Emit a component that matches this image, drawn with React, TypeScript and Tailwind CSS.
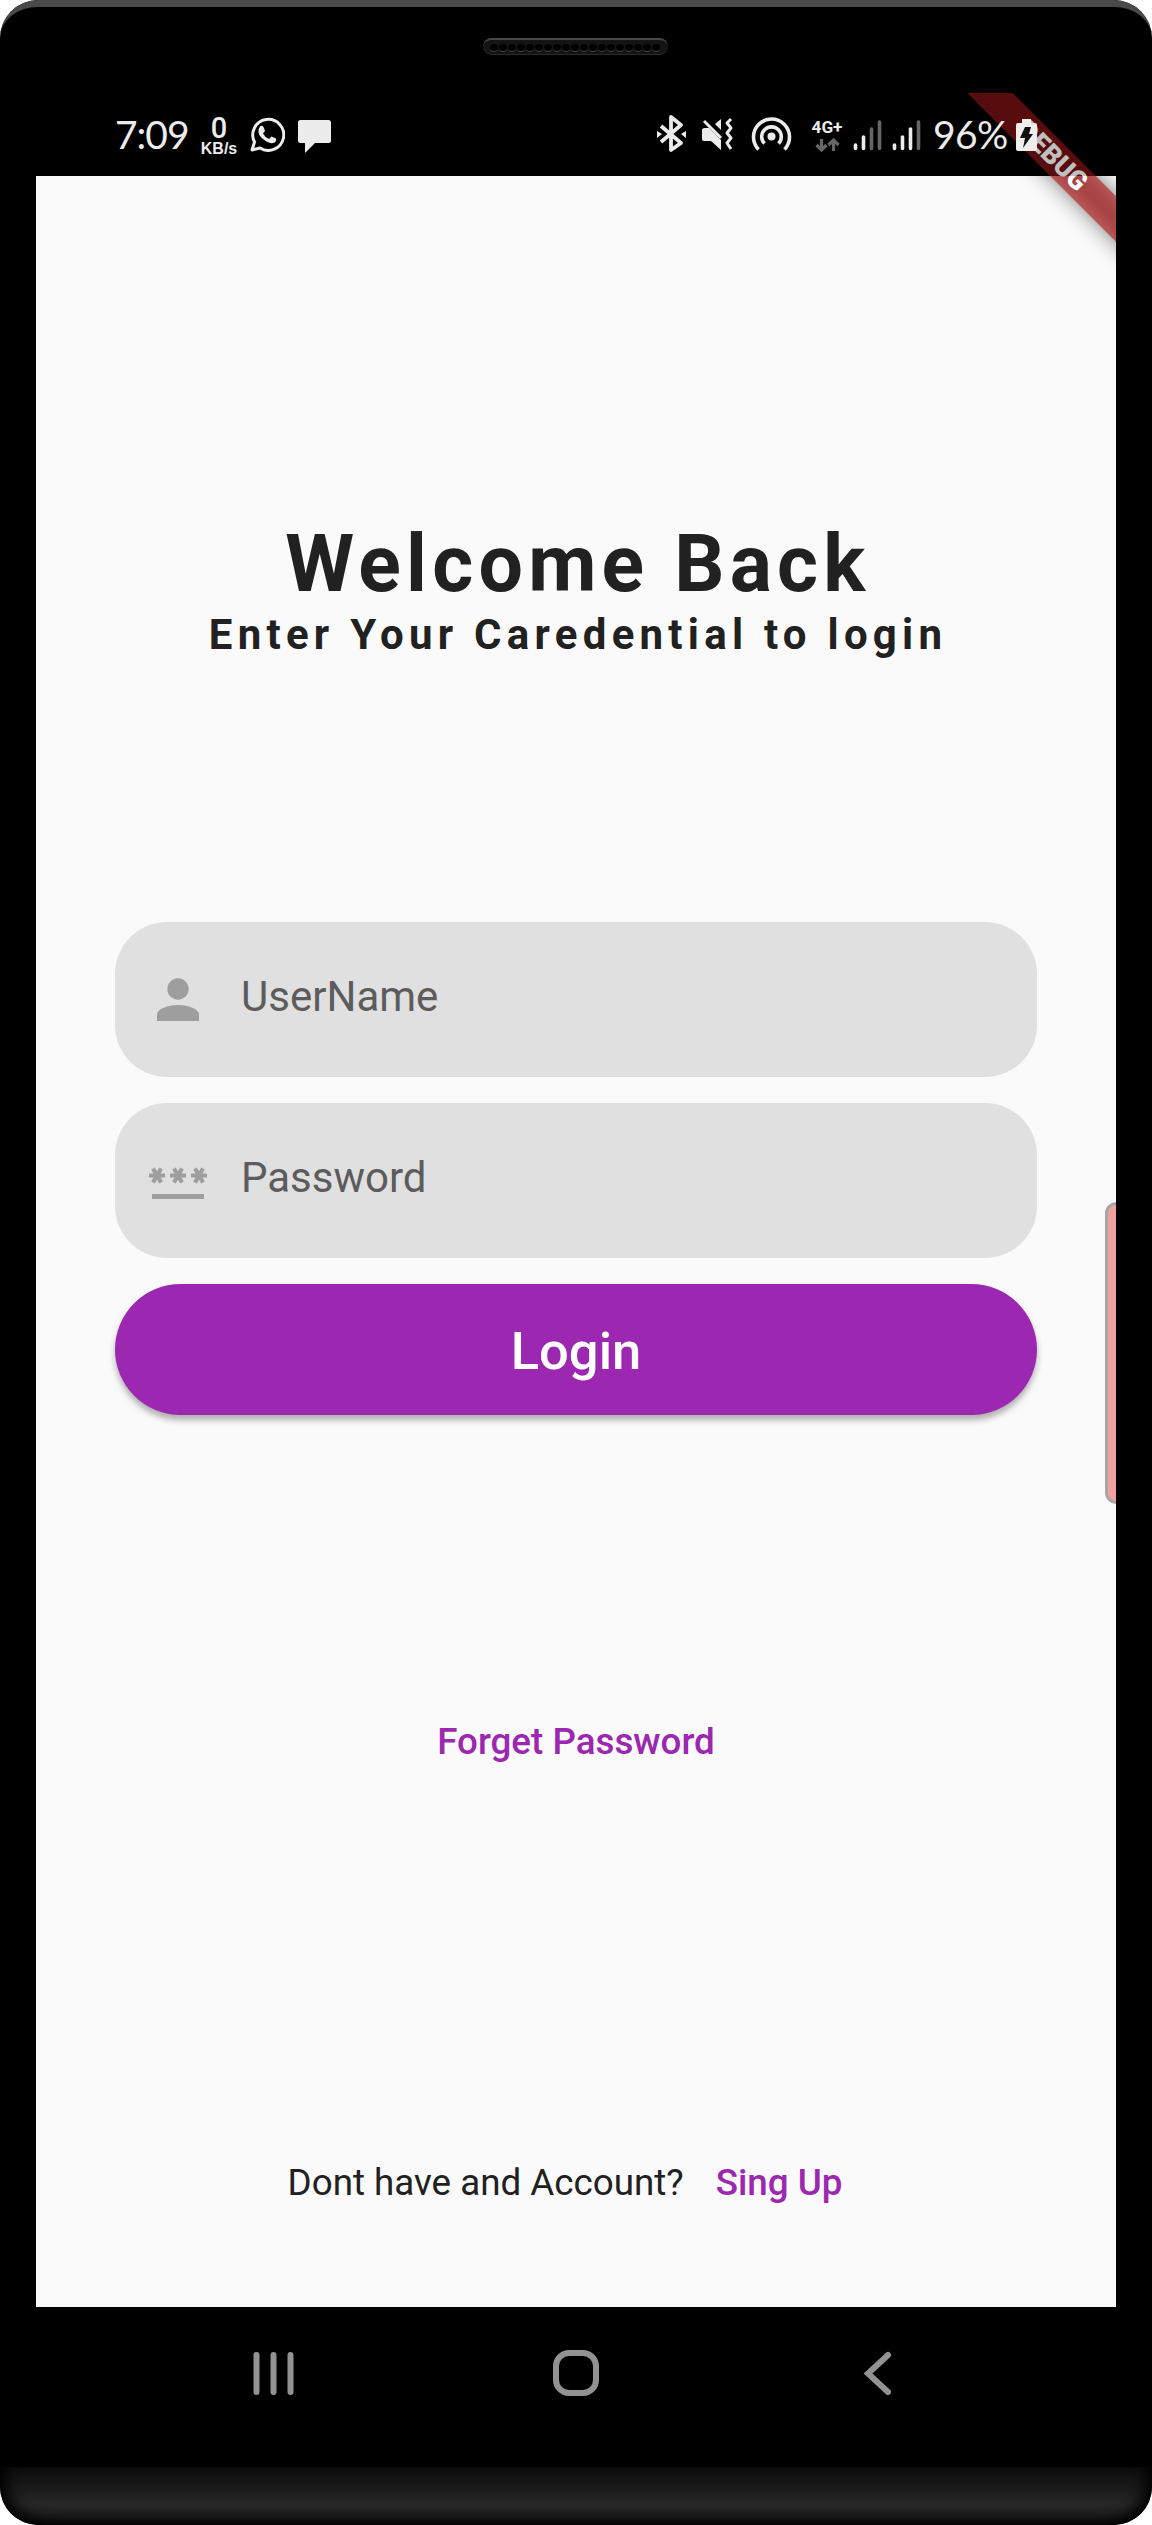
import React from "react";

function StatusBar() {
  return (
    <header className="relative z-10 h-[83px] shrink-0">
      <div className="absolute inset-0 bg-black/25" />
      <div className="relative flex h-full items-center justify-between pb-px pl-[79px] pr-[79px] text-[#ececec]">
        <div className="flex items-center">
          <span className="w-[76px] whitespace-nowrap font-[Lato] text-[39px] leading-none tracking-[-1px]">7:09</span>
          <span className="ml-[9px] mt-[2px] flex w-[38px] flex-col items-center font-['Liberation_Sans'] font-bold">
            <span className="font-[Roboto] text-[29px] font-medium leading-[28px]">0</span>
            <span className="text-[16px] leading-[14px]">KB/s</span>
          </span>
          <svg className="ml-[12px] mt-[1px]" width="35" height="35" viewBox="0 0 35 35" fill="none">
            <path d="M2 33l2.500-8A15.500 15.500 0 1 1 10 31z" stroke="#ececec" strokeWidth="3" strokeLinejoin="round" />
            <path d="M10 9.500q2-1.500 3.500.5l1.500 4-2 2.500q2 4 6 5.500l2.500-2.500 4.500 2q1 2-1.500 4-3 2-8-1-7-4-8-9-.5-4 1.500-6z" fill="#ececec" />
          </svg>
          <svg className="ml-[13px] mt-[4px]" width="33" height="33" viewBox="0 0 33 33" fill="#ececec">
            <path d="M2.500 0h28A2.500 2.500 0 0 1 33 2.500v18a2.500 2.500 0 0 1-2.500 2.500H17L7 33V23H2.500A2.500 2.500 0 0 1 0 20.500v-18A2.500 2.500 0 0 1 2.500 0z" />
          </svg>
        </div>
        <div className="flex items-center">
          <svg viewBox="656 114 277 40" className="h-[40px] w-[277px]" fill="none" stroke="#ececec">
            <path d="M661 126l20 17-10 7v-33l10 8-20 17" strokeWidth="3.800" strokeLinejoin="round" />
            <path d="M657 131l5 3-5 4zM686 131l-5 3 5 4z" fill="#ececec" stroke="none" />
            <path d="M705 128h4l12 12v10l-10-9h-7q-2 0-2-2v-9q0-2 3-2zM715 124l6-5v11z" fill="#ececec" stroke="none" />
            <path d="M704 121l17 17" strokeWidth="3" />
            <path d="M731 119l-4 4 4 5-4 5 4 5-4 5 4 6" strokeWidth="3" strokeLinejoin="round" />
            <circle cx="771.500" cy="136.500" r="4" fill="#ececec" stroke="none" />
            <path d="M758.500 149.500a18 18 0 1 1 26 0M764.500 143.500a9.800 9.800 0 1 1 14 0" strokeWidth="3.600" />
            <text x="811.500" y="133" textLength="31" lengthAdjust="spacingAndGlyphs" fontFamily="Roboto" fontSize="17" fontWeight="700" fill="#ececec" stroke="none">4G+</text>
            <path d="M821.500 139v11m-5-5l5 5 5-5M833.500 151v-11m-5 5l5-5 5 5" stroke="#666" strokeWidth="3.200" />
            <g strokeWidth="3.600" strokeLinecap="round">
              <path d="M855.500 145v3.500M863.500 137v11.500M894.500 145v3.500M902.500 137v11.500M910.500 129v19.500" />
              <path d="M871.500 129v19.500M879.500 122v26.500M918.500 122v26.500" stroke="#666" />
            </g>
          </svg>
          <span className="w-[78px] whitespace-nowrap font-[Lato] text-[39px] leading-none tracking-[-0.6px]">96%</span>
          <svg className="ml-[5px] mt-[2px]" width="21" height="32" viewBox="0 0 21 32">
            <path d="M6 0h9v4h4a2 2 0 0 1 2 2v24a2 2 0 0 1-2 2H2a2 2 0 0 1-2-2V6a2 2 0 0 1 2-2h4z" fill="#f1edec" />
            <path d="M9 8h6l-2 7h4L7 29l2-10H4z" fill="#111" />
          </svg>
        </div>
      </div>
    </header>
  );
}

function DebugBanner() {
  return (
    <div className="pointer-events-none absolute right-0 top-0 h-[230px] w-[230px] overflow-hidden">
      <div className="absolute left-[-33px] top-[47px] h-[32px] w-[400px] rotate-45 bg-black/50 blur-[10.4px]" />
      <div className="absolute left-[-33px] top-[47px] flex h-[32px] w-[400px] rotate-45 items-center justify-center bg-[#b71c1c]/63 text-[26.8px] font-black leading-none text-white">
        DEBUG
      </div>
    </div>
  );
}

function Asterisk({ x }: { x: number }) {
  return <path d={`M${x - 8} 8.500h16M${x - 4} 1.500l8 14M${x + 4} 1.500l-8 14`} stroke="#9e9e9e" strokeWidth="4.200" />;
}

function Field({ label, icon }: { label: string; icon: React.ReactNode }) {
  return (
    <label className="flex h-[155px] items-center rounded-[52px] bg-[#e0e0e0]">
      <span className="flex w-[126px] justify-center">{icon}</span>
      <span className="-mt-[6px] text-[42px] leading-none text-[#5c5c5c]">{label}</span>
    </label>
  );
}

function Speaker() {
  return (
    <div className="mr-[2px] flex h-[17px] w-[185px] items-center justify-between rounded-full border-t-2 border-b border-t-[#484848] border-b-[#2c2c2c] bg-[#141414] px-[7px]">
      {Array.from({ length: 19 }, (_, i) => (
        <span key={i} className="mt-[2px] h-[8px] w-[8px] rounded-full border-b border-[#444] bg-black" />
      ))}
    </div>
  );
}

export default function App() {
  return (
    <div className="h-[2525px] w-[1152px] bg-white font-[Roboto] text-[#212121]">
      <div className="relative flex h-full flex-col overflow-hidden rounded-[38px] bg-black">
        <div className="flex h-[93px] shrink-0 justify-center rounded-t-[38px] border-t-[7px] border-[#4a4a4a] pt-[31px]">
          <Speaker />
        </div>
        <div className="relative mx-[36px] flex h-[2374px] shrink-0 flex-col overflow-hidden">
          <StatusBar />
          <main className="flex h-[2131px] shrink-0 flex-col bg-[#fafafa] px-[79px]">
            <div className="mt-[342px] flex flex-col items-center whitespace-nowrap pl-[4px] font-bold">
              <h1 className="text-[78.75px] leading-[92px] tracking-[5.25px]">Welcome Back</h1>
              <p className="text-[42px] leading-[49px] tracking-[5.25px]">Enter Your Caredential to login</p>
            </div>
            <form className="mt-[263px] flex flex-col gap-[26px]">
              <Field
                label="UserName"
                icon={
                  <svg width="42" height="43" viewBox="0 0 42 43" fill="#9e9e9e">
                    <circle cx="21" cy="11" r="10.700" />
                    <path d="M0 43v-6C0 30 13 27 21 27s21 3 21 10v6z" />
                  </svg>
                }
              />
              <Field
                label="Password"
                icon={
                  <svg className="mt-[6px]" width="58" height="34" viewBox="0 0 58 34">
                    <Asterisk x={8} />
                    <Asterisk x={29} />
                    <Asterisk x={50} />
                    <path d="M3 27h52v5H3z" fill="#9e9e9e" />
                  </svg>
                }
              />
              <button type="button" className="h-[131px] rounded-full bg-[#9c27b0] pt-[3px] text-[52.5px] font-medium text-white shadow-[0_5px_6px_rgba(0,0,0,0.3)]">
                Login
              </button>
            </form>
            <div className="mt-[305px] self-center text-[36.75px] font-medium leading-[44px] text-[#9c27b0]">Forget Password</div>
            <div className="mt-[397px] flex justify-center gap-[32px] pr-[22px] text-[36.75px] leading-[44px]">
              <span>Dont have and Account?</span>
              <span className="font-medium text-[#9c27b0]">Sing Up</span>
            </div>
          </main>
          <nav className="flex h-[132px] items-center justify-center gap-[256px]">
            <svg width="46" height="46" viewBox="0 0 46 46" stroke="#929292" strokeWidth="6" strokeLinecap="round">
              <path d="M5.500 5v37M22.500 5v37M39.500 5v37" />
            </svg>
            <svg width="46" height="46" viewBox="0 0 46 46" fill="none" stroke="#929292" strokeWidth="6">
              <rect x="3" y="3" width="40" height="40" rx="13" />
            </svg>
            <svg width="46" height="46" viewBox="0 0 46 46" fill="none" stroke="#929292" strokeWidth="6" strokeLinecap="round">
              <path d="M33 5L13 23.500 33 42" />
            </svg>
          </nav>
          <DebugBanner />
          <div className="absolute -right-[12px] top-[1109px] h-[302px] w-[23px] rounded-[12px] border-[3px] border-[#a6a6a6] bg-[#f2a0a0]" />
        </div>
        <div className="h-[58px] rounded-b-[38px] bg-gradient-to-b from-[#0b0b0b] via-[#272727] via-65% to-[#151515] shadow-[inset_14px_-8px_14px_-8px_#000,inset_-14px_-8px_14px_-8px_#000]" />
      </div>
    </div>
  );
}
